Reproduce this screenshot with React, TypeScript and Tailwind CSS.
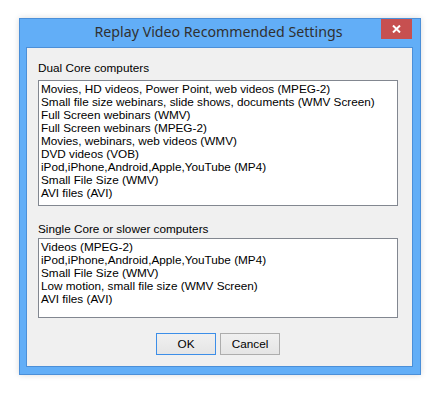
import React from "react";

const dual = [
  "Movies, HD videos, Power Point, web videos (MPEG-2)",
  "Small file size webinars, slide shows, documents (WMV Screen)",
  "Full Screen webinars (WMV)",
  "Full Screen webinars (MPEG-2)",
  "Movies, webinars, web videos (WMV)",
  "DVD videos (VOB)",
  "iPod,iPhone,Android,Apple,YouTube (MP4)",
  "Small File Size (WMV)",
  "AVI files (AVI)",
];

const single = [
  "Videos (MPEG-2)",
  "iPod,iPhone,Android,Apple,YouTube (MP4)",
  "Small File Size (WMV)",
  "Low motion, small file size (WMV Screen)",
  "AVI files (AVI)",
];

function ListBox({ items, h }: { items: string[]; h: string }) {
  return (
    <div className={`w-[360px] ${h} border border-[#828790] bg-white pl-[2px] pt-[1px]`}>
      {items.map((t) => (
        <div key={t} className="h-[13px] leading-[13px] whitespace-nowrap">
          {t}
        </div>
      ))}
    </div>
  );
}

export default function App() {
  return (
    <div className="w-[431px] h-[400px] bg-white pt-[18px] pl-[19px]">
      <div className="w-[402px] h-[357px] bg-[#62aef7] border border-[#4b8fd8] shadow-[0_0_6px_rgba(0,0,0,0.15)] flex flex-col">
        <div className="relative h-[28px] flex items-center justify-center">
          <span
            className="text-[14.2px] text-[#303030] leading-none pb-[2px] pr-[3px]"
            style={{ fontFamily: '"Noto Sans", sans-serif' }}
          >
            Replay Video Recommended Settings
          </span>
          <div className="absolute top-0 right-[8px] w-[31px] h-[20px] bg-[#c75050] flex items-center justify-center">
            <svg width="9" height="8" viewBox="0 0 9 8">
              <path d="M1 0.5 L8 7.5 M8 0.5 L1 7.5" stroke="white" strokeWidth="2" />
            </svg>
          </div>
        </div>
        <div
          className="ml-[6px] w-[387px] h-[320px] border border-[#4b8fd8] bg-[#f0f0f0] pl-[11px] pt-[13px] text-[11.75px] text-black"
          style={{ fontFamily: '"Liberation Sans", Arial, sans-serif' }}
        >
          <div className="h-[13px] leading-[13px]">Dual Core computers</div>
          <div className="mt-[6px]">
            <ListBox items={dual} h="h-[126px]" />
          </div>
          <div className="mt-[16px] h-[13px] leading-[13px]">Single Core or slower computers</div>
          <div className="mt-[3px]">
            <ListBox items={single} h="h-[80px]" />
          </div>
          <div className="mt-[15px] ml-[118px] flex gap-[4px]">
            <button className="w-[60px] h-[22px] border border-[#3c8ee8] bg-gradient-to-b from-[#f0f0f0] to-[#e5e5e5] text-[11.75px]">
              OK
            </button>
            <button className="w-[60px] h-[22px] border border-[#adadad] bg-gradient-to-b from-[#f0f0f0] to-[#e5e5e5] text-[11.75px]">
              Cancel
            </button>
          </div>
        </div>
      </div>
    </div>
  );
}
